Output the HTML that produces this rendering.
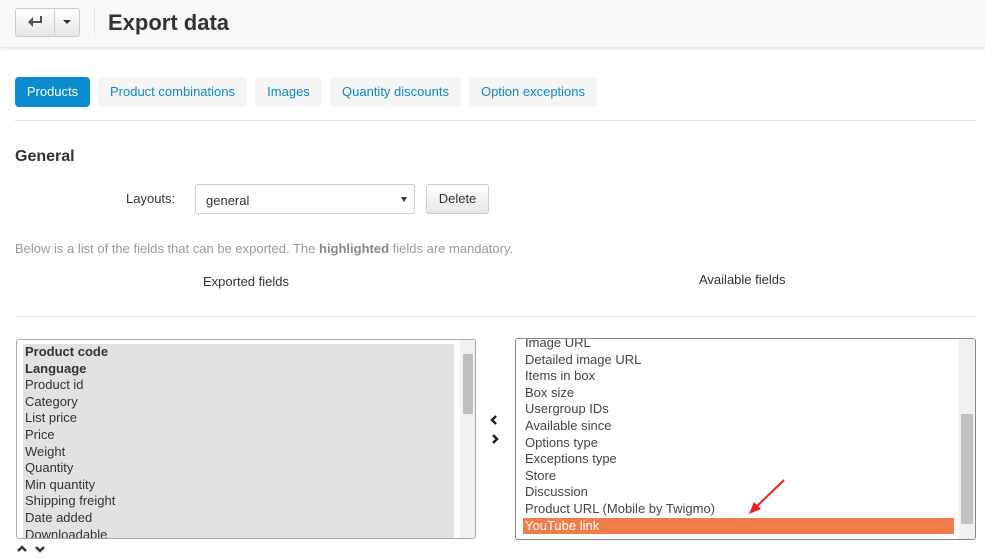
<!DOCTYPE html>
<html><head><style>
*{box-sizing:border-box;margin:0;padding:0}
body{width:985px;height:559px;overflow:hidden;background:#fff;font-family:"Liberation Sans",sans-serif;font-size:13px;color:#333;position:relative}
.hdr{position:absolute;left:0;top:0;width:985px;height:47px;background:#f8f8f8;box-shadow:0 2px 3px rgba(0,0,0,.12)}
.abs{position:absolute}
.btn{position:absolute;border:1px solid #ccc;border-radius:3px;background:linear-gradient(#fff,#e6e6e6)}
.tab{position:absolute;top:77px;height:30px;line-height:30px;border-radius:4px;background:#f5f5f5;color:#0b88c7;text-align:center;font-size:13px;white-space:nowrap}
.list{position:absolute;border:1px solid #aaa;border-radius:3px;overflow:hidden}
.it{height:16.6px;line-height:16.6px;padding-left:8px;font-size:13px;white-space:nowrap}
</style></head><body>
<div class="hdr"></div>
<div class="btn" style="left:15px;top:8px;width:65px;height:29px"></div>
<div class="abs" style="left:54px;top:9px;width:1px;height:27px;background:#ccc"></div>
<svg class="abs" style="left:27px;top:15px" width="16" height="12"><path d="M14 1 V7 H3" stroke="#555" stroke-width="2" fill="none"/><path d="M1 7 L6 2 V12 Z" fill="#555"/></svg>
<div class="abs" style="left:63px;top:20px;width:0;height:0;border-left:4px solid transparent;border-right:4px solid transparent;border-top:4px solid #333"></div>
<div class="abs" style="left:94px;top:8px;width:1px;height:30px;background:#e6e6e6"></div>
<div class="abs" style="left:108px;top:10px;font-size:22px;font-weight:bold;color:#333">Export data</div>

<div class="tab" style="left:15px;width:75px;background:#0a8ccf;color:#fff">Products</div>
<div class="tab" style="left:98px;width:149px">Product combinations</div>
<div class="tab" style="left:255px;width:67px">Images</div>
<div class="tab" style="left:330px;width:131px">Quantity discounts</div>
<div class="tab" style="left:469px;width:128px">Option exceptions</div>
<div class="abs" style="left:15px;top:120px;width:961px;height:1px;background:#e2e2e2"></div>

<div class="abs" style="left:15px;top:148px;font-size:16px;font-weight:bold">General</div>
<div class="abs" style="left:126px;top:191px">Layouts:</div>
<div class="abs" style="left:195px;top:184px;width:220px;height:30px;border:1px solid #ccc;border-radius:3px;padding:8px 10px">general</div>
<div class="abs" style="left:401px;top:197px;width:0;height:0;border-left:3px solid transparent;border-right:3px solid transparent;border-top:5px solid #333"></div>
<div class="btn" style="left:426px;top:184px;width:63px;height:30px;text-align:center;line-height:28px">Delete</div>
<div class="abs" style="left:15px;top:241px;color:#999">Below is a list of the fields that can be exported. The <b style="color:#888">highlighted</b> fields are mandatory.</div>
<div class="abs" style="left:203px;top:274px">Exported fields</div>
<div class="abs" style="left:699px;top:272px">Available fields</div>
<div class="abs" style="left:15px;top:316px;width:961px;height:1px;background:#e6e6e6"></div>

<div class="list" style="left:16px;top:339px;width:460px;height:200px">
 <div class="abs" style="left:6px;top:4px;width:431px;height:196px;background:#e3e2e1"></div>
 <div class="abs" style="left:0;top:4px;width:440px">
 <div class="it"><b>Product code</b></div><div class="it"><b>Language</b></div><div class="it">Product id</div><div class="it">Category</div><div class="it">List price</div><div class="it">Price</div><div class="it">Weight</div><div class="it">Quantity</div><div class="it">Min quantity</div><div class="it">Shipping freight</div><div class="it">Date added</div><div class="it">Downloadable</div>
 </div>
 <div class="abs" style="left:443px;top:0;width:16px;height:200px;background:#f1f1f1"></div>
 <div class="abs" style="left:446px;top:14px;width:10px;height:60px;background:#c1c1c1"></div>
</div>
<svg class="abs" style="left:16px;top:544px" width="32" height="10"><path d="M2 7 L6 3 L10 7" stroke="#333" stroke-width="2.5" fill="none"/><path d="M20 3 L24 7 L28 3" stroke="#333" stroke-width="2.5" fill="none"/></svg>
<svg class="abs" style="left:488px;top:414px" width="12" height="30"><path d="M8 2 L4 6 L8 10" stroke="#222" stroke-width="2.5" fill="none"/><path d="M5 21 L9 25 L5 29" stroke="#222" stroke-width="2.5" fill="none"/></svg>

<div class="list" style="left:515px;top:338px;width:461px;height:202px;border-color:#888">
 <div class="abs" style="left:1px;top:-4px;width:440px;color:#444">
 <div class="it">Image URL</div><div class="it">Detailed image URL</div><div class="it">Items in box</div><div class="it">Box size</div><div class="it">Usergroup IDs</div><div class="it">Available since</div><div class="it">Options type</div><div class="it">Exceptions type</div><div class="it">Store</div><div class="it">Discussion</div><div class="it">Product URL (Mobile by Twigmo)</div>
 <div class="it" style="background:#f07c4a;color:#fff;margin-left:6px;width:431px;padding-left:2px">YouTube link</div>
 </div>
 <div class="abs" style="left:443px;top:0;width:17px;height:202px;background:#f1f1f1"></div>
 <div class="abs" style="left:445px;top:75px;width:12px;height:110px;background:#c1c1c1"></div>
</div>
<svg class="abs" style="left:745px;top:478px" width="42" height="40"><path d="M39 2 L8 32" stroke="#e8231c" stroke-width="2"/><path d="M4 36 L9 24 L16 31 Z" fill="#e8231c"/></svg>
</body></html>
